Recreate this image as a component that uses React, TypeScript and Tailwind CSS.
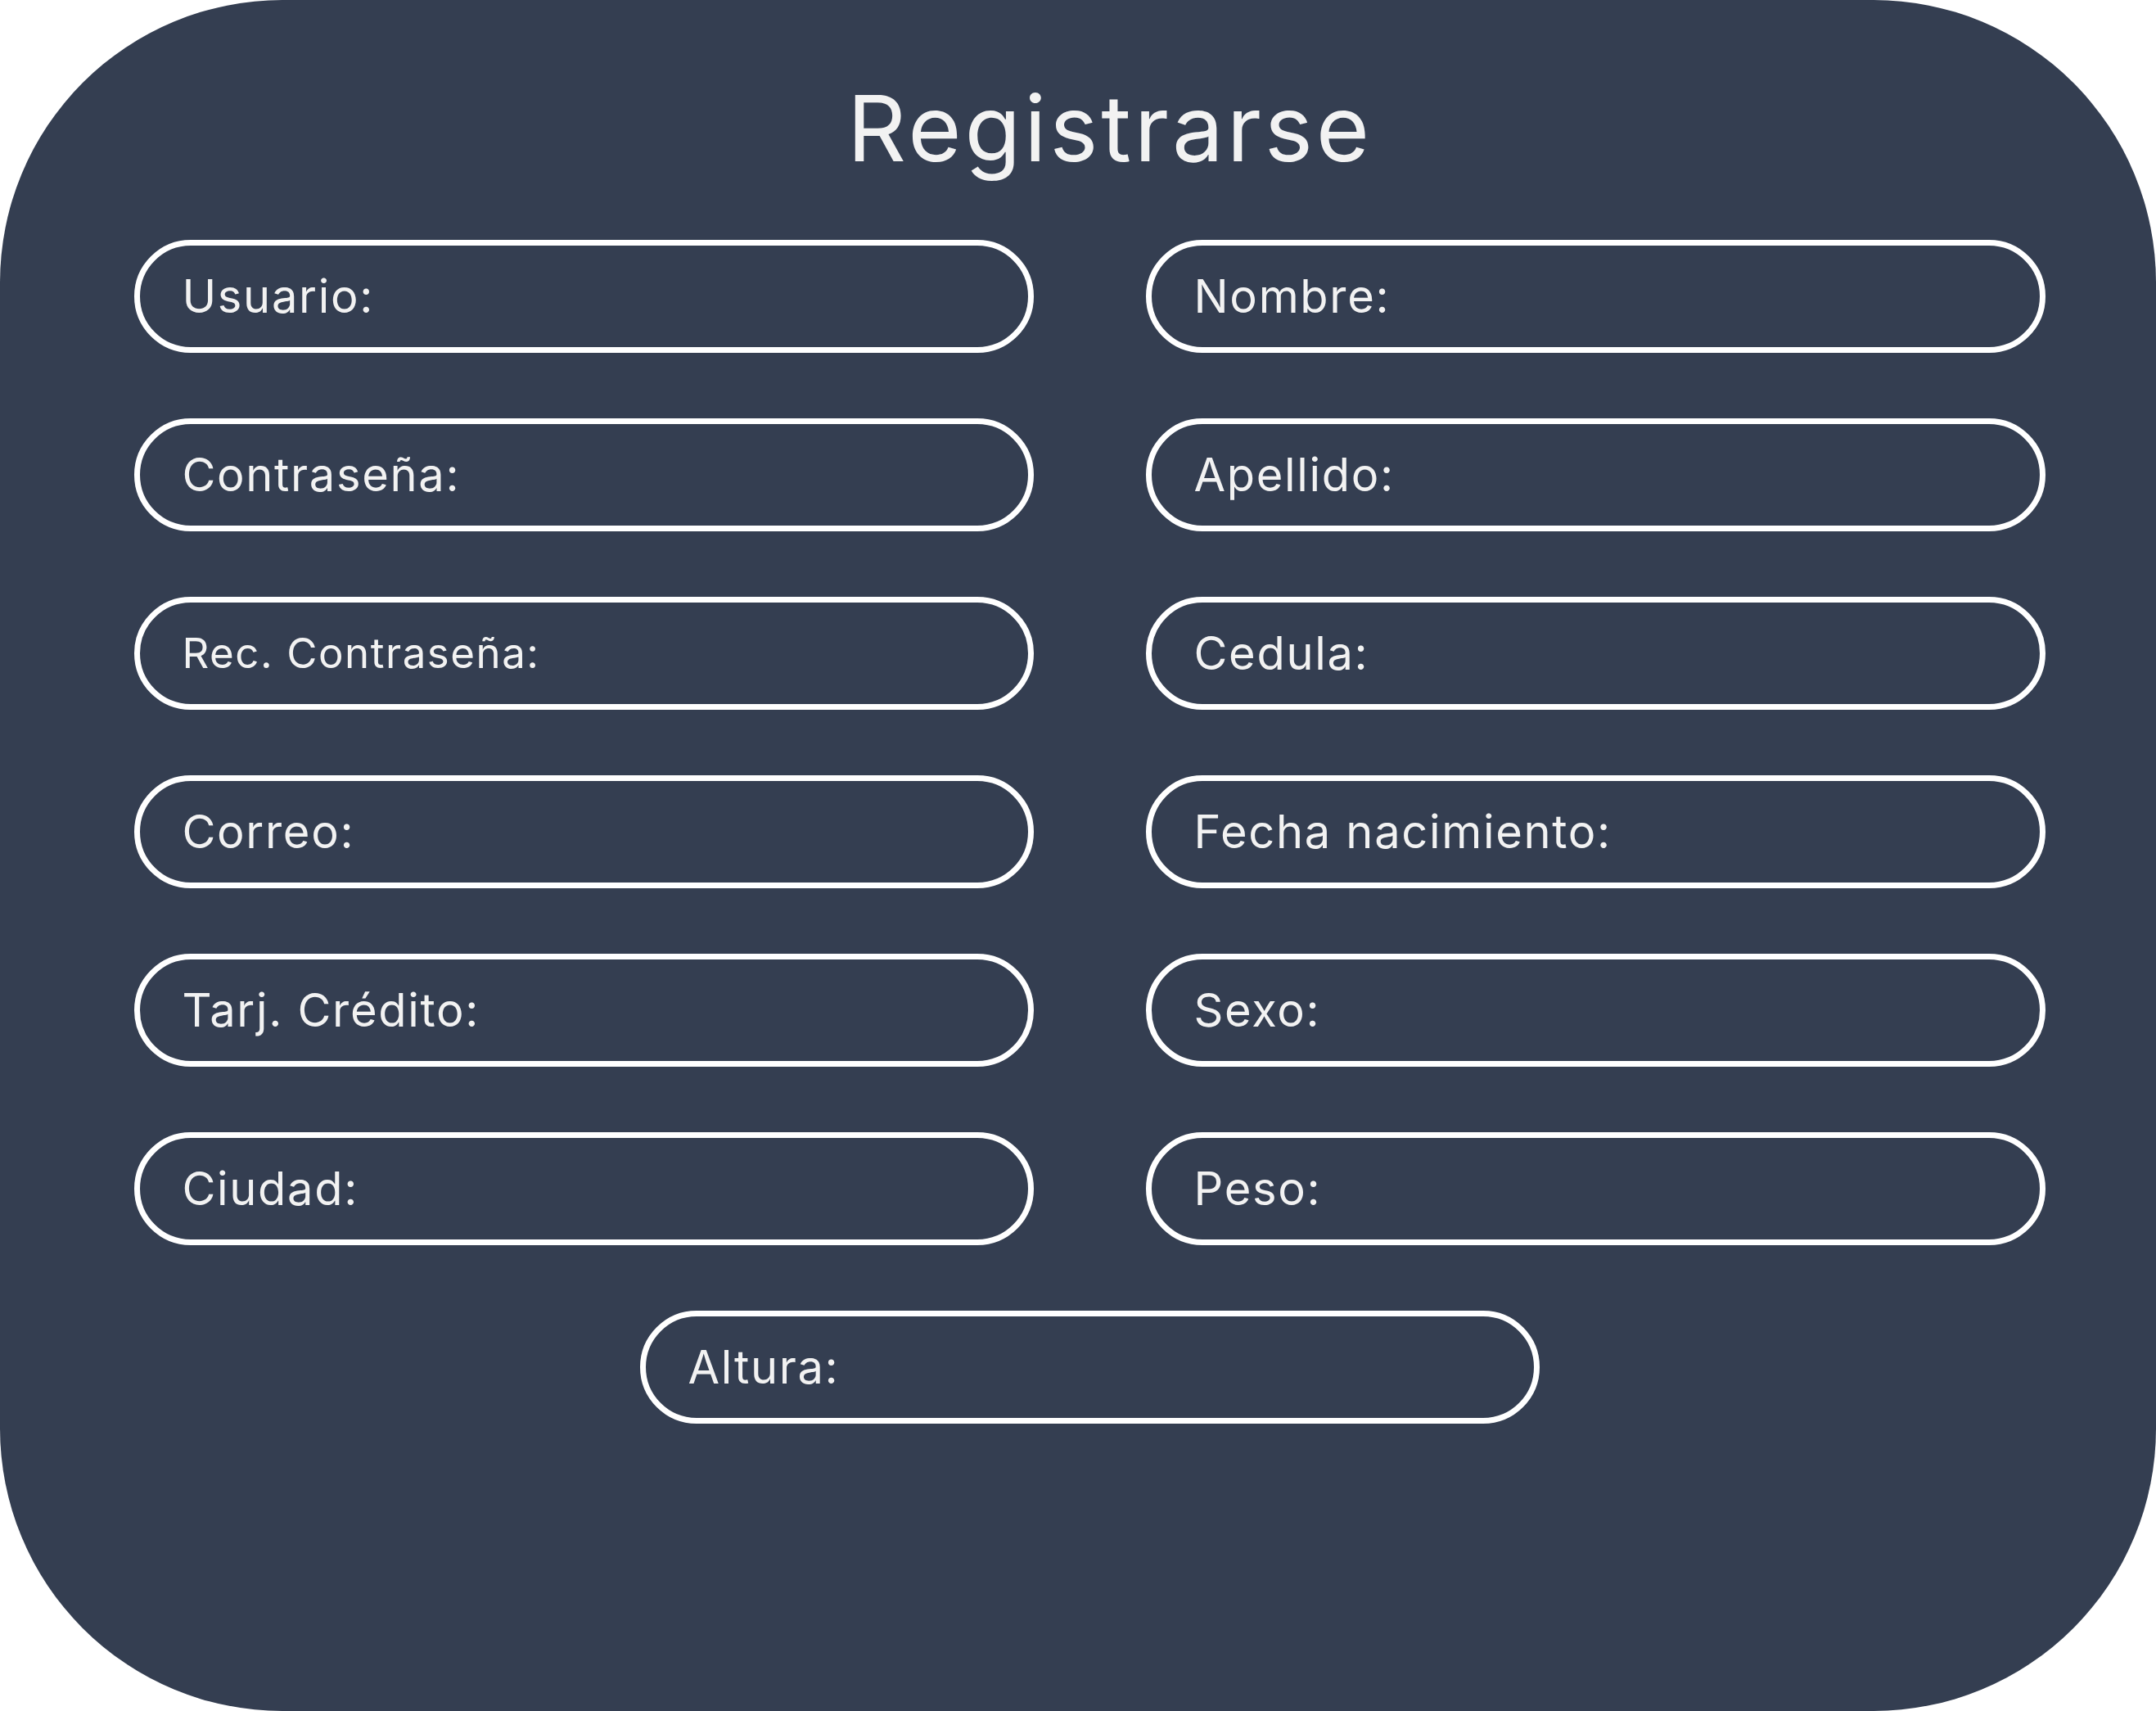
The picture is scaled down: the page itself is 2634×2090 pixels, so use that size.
import React from "react";

type Field = { label: string; cls?: string };

const left: Field[] = [
  { label: "Usuario:" },
  { label: "Contraseña:" },
  { label: "Rec. Contraseña:", cls: "text-[51px]" },
  { label: "Correo:" },
  { label: "Tarj. Crédito:" },
  { label: "Ciudad:" },
];

const right: Field[] = [
  { label: "Nombre:" },
  { label: "Apellido:" },
  { label: "Cedula:" },
  { label: "Fecha nacimiento:" },
  { label: "Sexo:" },
  { label: "Peso:" },
];

function Pill({ label, cls }: Field) {
  return (
    <div className="h-[138px] w-[1099px] rounded-full border-[7px] border-white flex items-center pl-[52px]">
      <span className={`text-[#f2f2f2] tracking-[0.03em] ${cls ?? "text-[56px]"}`}>{label}</span>
    </div>
  );
}

export default function App() {
  return (
    <div className="w-[2634px] h-[2090px] bg-white" style={{ fontFamily: "Inter, 'Noto Sans', sans-serif" }}>
      <div className="w-full h-full rounded-[345px] bg-[#343e51] flex flex-col items-center pt-[100px] pl-[28px]">
        <h1 className="ml-[50px] text-[112px] leading-none text-[#f2f2f2] font-normal tracking-[0.035em]">Registrarse</h1>
        <div className="mt-[81px] grid grid-cols-[1099px_1099px] gap-x-[137px] gap-y-[80px]">
          {left.map((f, i) => (
            <React.Fragment key={i}>
              <Pill {...f} />
              <Pill {...right[i]} />
            </React.Fragment>
          ))}
        </div>
        <div className="mt-[80px]">
          <Pill label="Altura:" />
        </div>
      </div>
    </div>
  );
}
